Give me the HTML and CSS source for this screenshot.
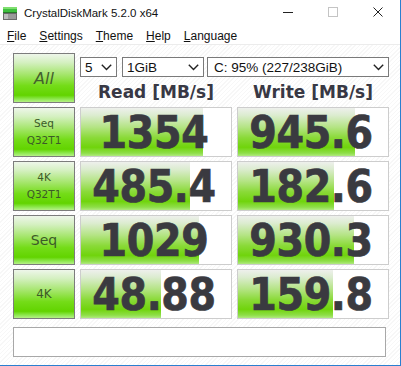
FILE: index.html
```html
<!DOCTYPE html>
<html>
<head>
<meta charset="utf-8">
<link rel="stylesheet" href="styles.css">
</head>
<body>
<div class="window">
  <div class="titlebar">
    <svg class="app-icon" width="14" height="14" viewBox="0 0 14 14">
      <rect x="0" y="1" width="14" height="5" fill="#3fbf3f"/>
      <rect x="0" y="1" width="14" height="2" fill="#7fdf6f"/>
      <rect x="0" y="6" width="14" height="1" fill="#2a7a2a"/>
      <rect x="0" y="7" width="14" height="7" fill="#6a6a6a"/>
      <rect x="1" y="8" width="12" height="5" fill="#9a9a9a"/>
      <rect x="1" y="8" width="4" height="5" fill="#bdbdbd"/>
    </svg>
    <span class="title">CrystalDiskMark 5.2.0 x64</span>
    <div class="controls">
      <div class="ctl"><svg width="10" height="10" viewBox="0 0 10 10"><line x1="0" y1="5.5" x2="10" y2="5.5" stroke="#222" stroke-width="1"/></svg></div>
      <div class="ctl"><svg width="10" height="10" viewBox="0 0 10 10"><rect x="0.5" y="0.5" width="9" height="9" fill="none" stroke="#c4c4c4" stroke-width="1"/></svg></div>
      <div class="ctl"><svg width="10" height="10" viewBox="0 0 10 10"><path d="M0.5 0.5 L9.5 9.5 M9.5 0.5 L0.5 9.5" stroke="#222" stroke-width="1"/></svg></div>
    </div>
  </div>
  <div class="menubar">
    <span class="mi"><u>F</u>ile</span>
    <span class="mi"><u>S</u>ettings</span>
    <span class="mi"><u>T</u>heme</span>
    <span class="mi"><u>H</u>elp</span>
    <span class="mi"><u>L</u>anguage</span>
  </div>
  <div class="main">
    <div class="grid">
      <div class="btn all">All</div>
      <div class="top">
        <div class="selects">
          <div class="sel s-count"><span>5</span><svg class="chev" width="11" height="7" viewBox="0 0 11 7"><polyline points="0.8,0.8 5.5,5.5 10.2,0.8" fill="none" stroke="#222" stroke-width="1.4"/></svg></div>
          <div class="sel s-size"><span>1GiB</span><svg class="chev" width="11" height="7" viewBox="0 0 11 7"><polyline points="0.8,0.8 5.5,5.5 10.2,0.8" fill="none" stroke="#222" stroke-width="1.4"/></svg></div>
          <div class="sel s-drive"><span>C: 95% (227/238GiB)</span><svg class="chev" width="11" height="7" viewBox="0 0 11 7"><polyline points="0.8,0.8 5.5,5.5 10.2,0.8" fill="none" stroke="#222" stroke-width="1.4"/></svg></div>
        </div>
        <div class="heads">
          <div class="head">Read [MB/s]</div>
          <div class="head">Write [MB/s]</div>
        </div>
      </div>

      <div class="btn lbl small">Seq<br>Q32T1</div>
      <div class="val"><div class="fill" style="width:81%"></div><span class="num">1354</span></div>
      <div class="val"><div class="fill" style="width:78%"></div><span class="num">945.6</span></div>

      <div class="btn lbl small">4K<br>Q32T1</div>
      <div class="val"><div class="fill" style="width:72.4%"></div><span class="num">485.4</span></div>
      <div class="val"><div class="fill" style="width:64.1%"></div><span class="num">182.6</span></div>

      <div class="btn lbl big">Seq</div>
      <div class="val"><div class="fill" style="width:78.7%"></div><span class="num">1029</span></div>
      <div class="val"><div class="fill" style="width:77.6%"></div><span class="num">930.3</span></div>

      <div class="btn lbl mid">4K</div>
      <div class="val"><div class="fill" style="width:53%"></div><span class="num">48.88</span></div>
      <div class="val"><div class="fill" style="width:63%"></div><span class="num">159.8</span></div>
    </div>
    <div class="status"></div>
  </div>
</div>
</body>
</html>
```

FILE: styles.css
```css
html, body {
  margin: 0;
  padding: 0;
  background: #ffffff;
}

.window {
  width: 401px;
  height: 366px;
  box-sizing: border-box;
  border-right: 1px solid #2a7fd0;
  border-bottom: 1px solid #2a7fd0;
  background: #ffffff;
  overflow: hidden;
  display: flex;
  flex-direction: column;
  font-family: "Liberation Sans", Arial, sans-serif;
}

.titlebar {
  height: 26px;
  display: flex;
  align-items: center;
  background: #ffffff;
}

.app-icon {
  margin-left: 3px;
  margin-top: -1px;
}

.title {
  margin-left: 7px;
  font-size: 11.5px;
  color: #111;
  margin-top: -1px;
}

.controls {
  margin-left: auto;
  display: flex;
  align-self: stretch;
}

.ctl {
  width: 45px;
  display: flex;
  align-items: center;
  justify-content: center;
  margin-top: -2px;
}

.menubar {
  height: 18px;
  display: flex;
  align-items: center;
  padding-left: 7px;
  font-size: 12px;
  color: #111;
  border-bottom: 1px solid #ececec;
}

.mi {
  margin-right: 13px;
  margin-top: 1px;
}

.mi u {
  text-decoration-thickness: 1px;
  text-underline-offset: 1px;
}

.main {
  flex: 1;
  padding: 8px 0 0 13px;
  background:
    repeating-linear-gradient(135deg, rgba(0,0,0,0) 0 2px, rgba(0,0,0,0.03) 2px 3px),
    #ffffff;
}

.grid {
  display: grid;
  grid-template-columns: 62px 152px 152px;
  grid-auto-rows: 50px;
  column-gap: 5px;
  row-gap: 4px;
}

.btn {
  box-sizing: border-box;
  border: 1px solid #7c7c7c;
  background: linear-gradient(to bottom,
    #eef6ea 0%,
    #d4f0c0 18%,
    #a6e66e 42%,
    #74dc18 66%,
    #62d400 86%,
    #8ee850 94%,
    #b6f088 100%);
  display: flex;
  align-items: center;
  justify-content: center;
  text-align: center;
  color: #3c5a28;
  font-family: "DejaVu Sans", sans-serif;
}

.all {
  font-size: 16px;
  font-style: italic;
  color: #44602e;
}

.small {
  font-size: 10.5px;
  line-height: 17px;
}

.big {
  font-size: 14px;
}

.mid {
  font-size: 12px;
}

.top {
  grid-column: 2 / 4;
  display: flex;
  flex-direction: column;
}

.selects {
  margin-top: 4px;
  display: flex;
  height: 20px;
}

.sel {
  box-sizing: border-box;
  height: 20px;
  border: 1px solid #7a7a7a;
  background: #ffffff;
  display: flex;
  align-items: center;
  font-size: 13.5px;
  color: #111;
  padding-left: 4px;
  padding-right: 4px;
}

.sel span {
  flex: 1;
}

.s-count { width: 37px; margin-right: 5px; }
.s-size { width: 82px; margin-right: 3px; }
.s-drive { width: 182px; padding-left: 6px; }

.heads {
  display: grid;
  grid-template-columns: 152px 152px;
  column-gap: 5px;
  margin-top: 4px;
}

.head {
  text-align: center;
  font-family: "DejaVu Sans", sans-serif;
  font-weight: bold;
  font-size: 17px;
  color: #383844;
  line-height: 22px;
}

.val {
  position: relative;
  box-sizing: border-box;
  border: 1px solid #cdcdcd;
  background: #ffffff;
  display: flex;
  align-items: center;
  justify-content: center;
  overflow: hidden;
}

.fill {
  position: absolute;
  left: 0;
  top: 0;
  bottom: 0;
  background: linear-gradient(to bottom,
    #eef0ec 0%,
    #dcecd0 15%,
    #b4e484 40%,
    #8ada38 62%,
    #70d40c 82%,
    #8ede48 94%,
    #b0ea80 100%);
}

.num {
  position: relative;
  font-family: "DejaVu Sans", sans-serif;
  font-weight: bold;
  font-stretch: condensed;
  font-size: 44px;
  line-height: 44px;
  color: #3a3a40;
  -webkit-text-stroke: 0.7px #3a3a40;
  letter-spacing: -0.3px;
  margin-top: 2px;
  margin-right: 4px;
}

.status {
  margin-top: 8px;
  width: 373px;
  height: 30px;
  box-sizing: border-box;
  border: 1px solid #a8a8a8;
  background: #ffffff;
}
```
